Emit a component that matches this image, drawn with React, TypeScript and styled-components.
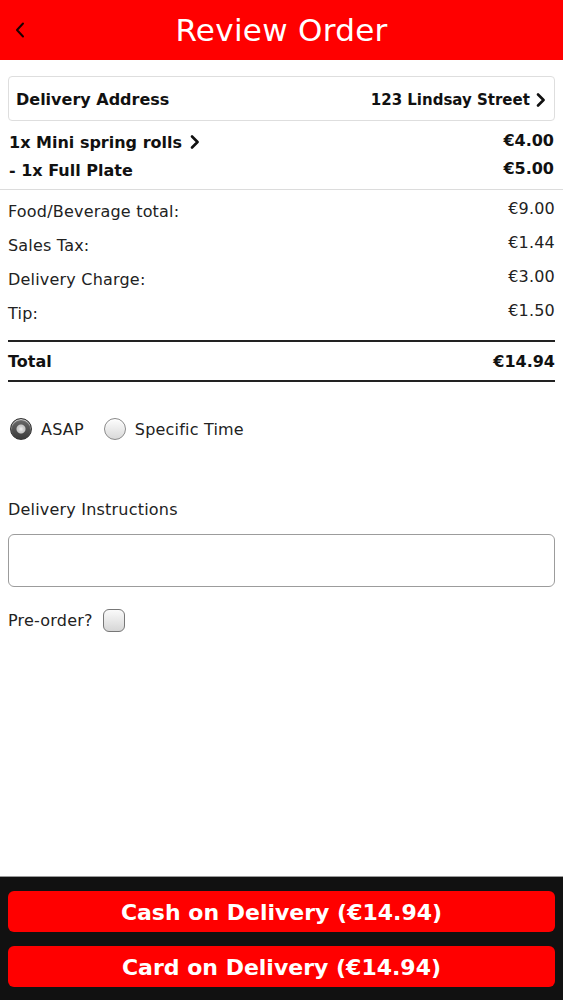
import React, { useState } from "react";
import styled, { createGlobalStyle } from "styled-components";

type Line = { label: string; amount: string };

const orderItems: { name: string; price: string; link?: boolean }[] = [
  { name: "1x Mini spring rolls", price: "€4.00", link: true },
  { name: "- 1x Full Plate", price: "€5.00" },
];

const charges: Line[] = [
  { label: "Food/Beverage total:", amount: "€9.00" },
  { label: "Sales Tax:", amount: "€1.44" },
  { label: "Delivery Charge:", amount: "€3.00" },
  { label: "Tip:", amount: "€1.50" },
];

const total = "€14.94";

const Chevron: React.FC<{ size?: number; weight?: number }> = ({
  size = 14,
  weight = 2.6,
}) => (
  <svg width={size * 0.65} height={size} viewBox="0 0 9 14" fill="none">
    <path
      d="M2 1.5 L7.5 7 L2 12.5"
      stroke="currentColor"
      strokeWidth={weight}
      strokeLinecap="round"
      strokeLinejoin="round"
    />
  </svg>
);

const App: React.FC = () => {
  const [when, setWhen] = useState<"asap" | "specific">("asap");
  const [preorder, setPreorder] = useState<boolean>(false);
  const [notes, setNotes] = useState<string>("");

  return (
    <>
      <GlobalStyle />
      <StPage>
        <StHeader>
          <StBackButton aria-label="Back">
            <svg width="10" height="16" viewBox="0 0 10 16" fill="none">
              <path
                d="M8 1.5 L2 8 L8 14.5"
                stroke="currentColor"
                strokeWidth="2"
                strokeLinecap="round"
                strokeLinejoin="round"
              />
            </svg>
          </StBackButton>
          <StTitle>Review Order</StTitle>
          <span />
        </StHeader>

        <StAddressCard>
          <StAddressLabel>Delivery Address</StAddressLabel>
          <StAddressValue>
            123 Lindsay Street
            <Chevron size={14} />
          </StAddressValue>
        </StAddressCard>

        <StItems>
          {orderItems.map((item) => (
            <StItemRow key={item.name}>
              <StItemName>
                {item.name}
                {item.link && <Chevron size={14} />}
              </StItemName>
              <StItemPrice>{item.price}</StItemPrice>
            </StItemRow>
          ))}
        </StItems>

        <StCharges>
          {charges.map((c) => (
            <StChargeRow key={c.label}>
              <StChargeLabel>{c.label}</StChargeLabel>
              <StChargeAmount>{c.amount}</StChargeAmount>
            </StChargeRow>
          ))}
        </StCharges>

        <StTotalRow>
          <span>Total</span>
          <span>{total}</span>
        </StTotalRow>

        <StTimeChoice>
          <StOption>
            <StRadio
              type="radio"
              name="when"
              checked={when === "asap"}
              onChange={() => setWhen("asap")}
            />
            ASAP
          </StOption>
          <StOption>
            <StRadio
              type="radio"
              name="when"
              checked={when === "specific"}
              onChange={() => setWhen("specific")}
            />
            Specific Time
          </StOption>
        </StTimeChoice>

        <StField>
          <StFieldLabel htmlFor="instructions">Delivery Instructions</StFieldLabel>
          <StInput
            id="instructions"
            value={notes}
            onChange={(e) => setNotes(e.target.value)}
          />
        </StField>

        <StPreorder>
          Pre-order?
          <StCheckbox
            type="checkbox"
            checked={preorder}
            onChange={() => setPreorder(!preorder)}
          />
        </StPreorder>

        <StFooter>
          <StPayButton>Cash on Delivery ({total})</StPayButton>
          <StPayButton>Card on Delivery ({total})</StPayButton>
        </StFooter>
      </StPage>
    </>
  );
};

const GlobalStyle = createGlobalStyle`
  * {
    box-sizing: border-box;
  }
  body {
    margin: 0;
    background: #fff;
    font-family: "DejaVu Sans", Verdana, sans-serif;
    color: #222;
  }
`;

const StPage = styled.div`
  display: flex;
  flex-direction: column;
  min-height: 100vh;
`;

const StHeader = styled.header`
  display: grid;
  grid-template-columns: 60px 1fr 60px;
  align-items: center;
  height: 60px;
  background-color: #ff0000;
`;

const StBackButton = styled.button`
  display: flex;
  align-items: center;
  justify-content: flex-start;
  height: 100%;
  padding: 0 0 0 15px;
  background: none;
  border: none;
  color: #1a0000;
  cursor: pointer;
`;

const StTitle = styled.h1`
  margin: 0;
  text-align: center;
  font-size: 31px;
  font-weight: normal;
  color: #fff;
  letter-spacing: 0.3px;
`;

const StAddressCard = styled.div`
  display: flex;
  align-items: center;
  justify-content: space-between;
  height: 45px;
  margin: 16px 8px 0;
  padding: 2px 9px 0 7px;
  border: 1px solid #dedede;
  border-radius: 4px;
  font-size: 15px;
  font-weight: bold;
  color: #111;
`;

const StAddressLabel = styled.span`
  font-size: 16px;
`;

const StAddressValue = styled.span`
  display: flex;
  align-items: center;
  gap: 6px;
`;

const StItems = styled.ul`
  list-style: none;
  margin: 0;
  padding: 7px 9px 5px 9px;
  border-bottom: 1px solid #dcdcdc;
`;

const StItemRow = styled.li`
  display: flex;
  justify-content: space-between;
  align-items: center;
  height: 28px;
  font-size: 16px;
  font-weight: bold;
  color: #111;
`;

const StItemName = styled.span`
  display: flex;
  align-items: center;
  gap: 8px;
`;

const StItemPrice = styled.span`
  margin-top: -4px;
`;

const StCharges = styled.div`
  padding: 4px 8px 10px;
`;

const StChargeRow = styled.div`
  display: flex;
  justify-content: space-between;
  align-items: flex-start;
  height: 34px;
  font-size: 16px;
  letter-spacing: 0.2px;
`;

const StChargeLabel = styled.span`
  padding-top: 8px;
`;

const StChargeAmount = styled.span`
  padding-top: 5px;
`;

const StTotalRow = styled.div`
  display: flex;
  justify-content: space-between;
  align-items: center;
  height: 42px;
  margin: 0 8px;
  border-top: 2px solid #222;
  border-bottom: 2px solid #222;
  font-size: 16px;
  font-weight: bold;
  color: #111;
`;

const StTimeChoice = styled.div`
  display: flex;
  gap: 20px;
  margin: 36px 0 0 10px;
`;

const StOption = styled.label`
  display: flex;
  align-items: center;
  gap: 9px;
  font-size: 16px;
  letter-spacing: 0.2px;
  cursor: pointer;
`;

const StRadio = styled.input`
  appearance: none;
  width: 22px;
  height: 22px;
  margin: 0;
  border-radius: 50%;
  border: 1px solid #8a8a8a;
  background: linear-gradient(#fdfdfd, #d9d9d9);
  box-shadow: inset 0 1px 1px rgba(255, 255, 255, 0.8);
  cursor: pointer;

  &:checked {
    border-color: #333;
    background: radial-gradient(
        circle,
        #f2f2f2 0,
        #c8c8c8 3px,
        #c8c8c8 4px,
        transparent 5px
      ),
      linear-gradient(#6a6a6a, #3b3b3b);
  }
`;

const StField = styled.div`
  display: flex;
  flex-direction: column;
  gap: 14px;
  margin: 60px 8px 0;
`;

const StFieldLabel = styled.label`
  font-size: 16px;
  line-height: 20px;
  letter-spacing: 0.2px;
`;

const StInput = styled.input`
  height: 53px;
  padding: 0 10px;
  border: 1px solid #9c9c9c;
  border-radius: 6px;
  font-size: 16px;
  font-family: inherit;
  outline: none;
`;

const StPreorder = styled.label`
  display: flex;
  align-items: center;
  gap: 10px;
  margin: 22px 8px 0;
  font-size: 16px;
  letter-spacing: 0.2px;
`;

const StCheckbox = styled.input`
  appearance: none;
  width: 22px;
  height: 23px;
  margin: 0;
  border: 1px solid #777;
  border-radius: 6px;
  background: linear-gradient(#fafafa, #d6d6d6);
  cursor: pointer;

  &:checked {
    background: linear-gradient(#6a6a6a, #3b3b3b);
  }
`;

const StFooter = styled.footer`
  display: flex;
  flex-direction: column;
  gap: 14px;
  margin-top: auto;
  padding: 14px 8px 13px;
  background-color: #111;
  border-top: 1px solid #9a9a9a;
`;

const StPayButton = styled.button`
  height: 41px;
  padding-top: 2px;
  border: none;
  border-radius: 6px;
  background-color: #ff0000;
  color: #fff;
  font-family: inherit;
  font-size: 22px;
  font-weight: bold;
  cursor: pointer;
`;

export default App;
